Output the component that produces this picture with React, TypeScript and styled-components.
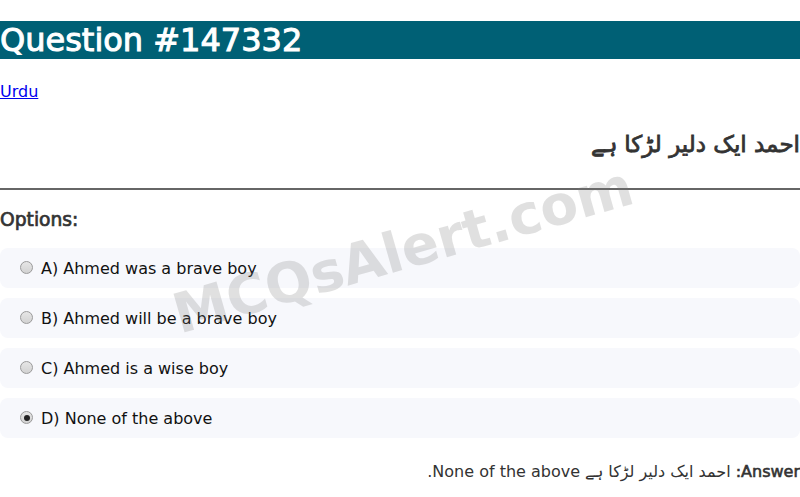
import React from 'react';
import styled, { createGlobalStyle, css } from 'styled-components';

const colors = {
  banner: '#006075',
  texto: '#333333',
  opcion: '#f7f8fc',
  enlace: '#0000ee',
  linea: '#666666',
};

// the page's bold text is the regular face thickened, not the real bold cut
const fakeBold = (stroke: string) => css`
  font-weight: 400;
  -webkit-text-stroke: ${stroke} currentColor;
`;

const GlobalStyle = createGlobalStyle`
  html, body {
    margin: 0;
    padding: 0;
    background: #ffffff;
  }
  body {
    font-family: 'DejaVu Sans', 'Noto Sans', sans-serif;
    font-size: 16px;
    color: #111;
  }
`;

const Page = styled.div`
  position: relative;
  min-height: 497px;
  overflow: hidden;
`;

const Title = styled.h1`
  margin: 21px 0 0;
  background: ${colors.banner};
  color: #fff;
  font-size: 32px;
  ${fakeBold('1px')};
  line-height: 38px;
  height: 38px;
`;

const LangLine = styled.p`
  margin: 23px 0 0;
  line-height: 19px;
`;

const LangLink = styled.a`
  color: ${colors.enlace};
  text-decoration: underline;
`;

const QuestionText = styled.h2`
  margin: 29px 0 0;
  direction: rtl;
  text-align: right;
  font-size: 23px;
  ${fakeBold('0.8px')};
  line-height: 28px;
  color: ${colors.texto};
`;

const Divider = styled.hr`
  margin: 30px 0 0;
  border: 0;
  border-top: 2px solid ${colors.linea};
  height: 0;
`;

const OptionsTitle = styled.h3`
  margin: 19px 0 0;
  font-size: 18.7px;
  ${fakeBold('0.7px')};
  line-height: 22px;
  color: ${colors.texto};
`;

const OptionList = styled.div`
  margin-top: 17px;
  display: flex;
  flex-direction: column;
  gap: 10px;
`;

const OptionRow = styled.label`
  display: flex;
  align-items: center;
  height: 40px;
  padding: 0 20px;
  border-radius: 8px;
  background: ${colors.opcion};
  color: #111;
  font-size: 16px;
`;

const Radio = styled.span<{ $checked?: boolean }>`
  position: relative;
  width: 13px;
  height: 13px;
  box-sizing: border-box;
  border-radius: 50%;
  border: 1px solid #9a9a9a;
  background: linear-gradient(#e6e6e6, #d2d2d2);
  margin: -1px 8px 0 0;
  flex-shrink: 0;

  &::after {
    content: '';
    display: ${({ $checked }) => ($checked ? 'block' : 'none')};
    position: absolute;
    top: 2.5px;
    left: 2.5px;
    width: 6px;
    height: 6px;
    border-radius: 50%;
    background: #222;
  }
`;

const Answer = styled.p`
  margin: 24px 0 0;
  direction: rtl;
  text-align: right;
  color: ${colors.texto};
  font-size: 16px;
  line-height: 19px;

  strong {
    ${fakeBold('0.6px')};
  }
`;

const Watermark = styled.div`
  position: absolute;
  top: 250px;
  left: 403px;
  transform: translate(-50%, -50%) rotate(-16deg);
  font-size: 55px;
  font-weight: 700;
  color: #777;
  opacity: 0.22;
  white-space: nowrap;
  pointer-events: none;
  user-select: none;
`;

const opciones = [
  { id: 'A', texto: 'Ahmed was a brave boy' },
  { id: 'B', texto: 'Ahmed will be a brave boy' },
  { id: 'C', texto: 'Ahmed is a wise boy' },
  { id: 'D', texto: 'None of the above' },
];

const App: React.FC = () => {
  const seleccion = 'D';
  const pregunta = 'احمد ایک دلیر لڑکا ہے';

  return (
    <Page>
      <GlobalStyle />
      <Title>Question #147332</Title>
      <LangLine>
        <LangLink href="#">Urdu</LangLink>
      </LangLine>
      <QuestionText>{pregunta}</QuestionText>
      <Divider />
      <OptionsTitle>Options:</OptionsTitle>
      <OptionList>
        {opciones.map(op => (
          <OptionRow key={op.id}>
            <Radio $checked={op.id === seleccion} />
            {op.id}) {op.texto}
          </OptionRow>
        ))}
      </OptionList>
      <Answer>
        <strong>Answer:</strong> {pregunta} None of the above.
      </Answer>
      <Watermark>MCQsAlert.com</Watermark>
    </Page>
  );
};

export default App;
